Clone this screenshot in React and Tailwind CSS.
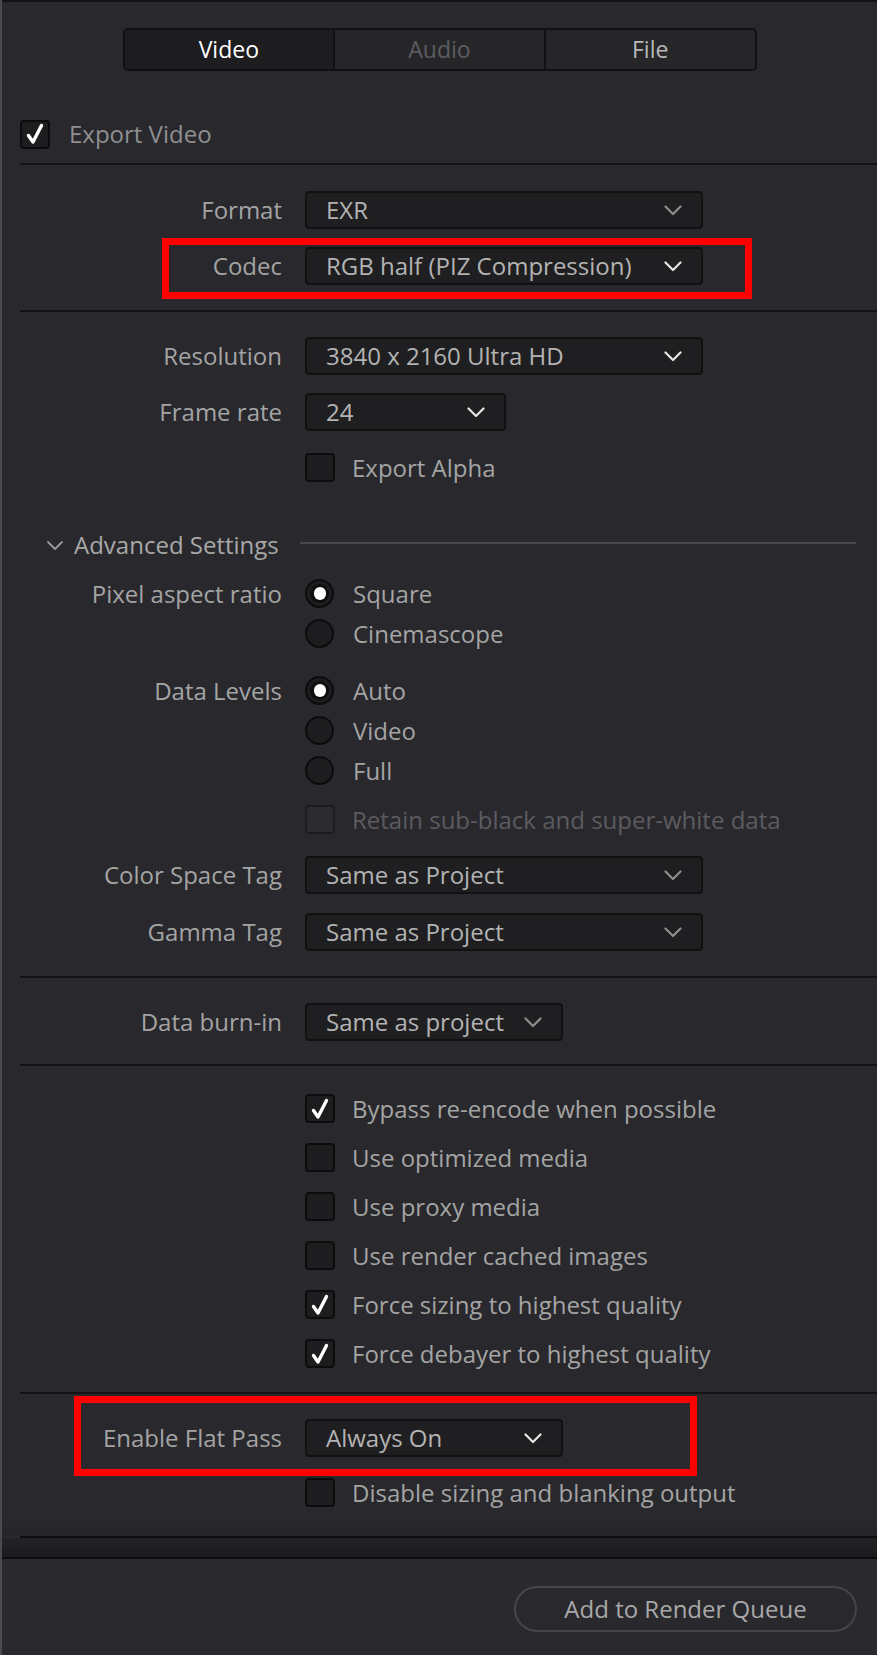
import React from 'react';

const Chevron = ({ bright }) => (
  <svg width="18" height="11" viewBox="0 0 18 11" fill="none">
    <polyline
      points="1.5,1.5 9,9 16.5,1.5"
      stroke={bright ? '#e6e6e6' : '#8e8e90'}
      strokeWidth="2.2"
      strokeLinecap="round"
      strokeLinejoin="round"
    />
  </svg>
);

const Tick = () => (
  <svg width="20" height="22" viewBox="0 0 20 22" fill="none">
    <path d="M3.5 12.5 L8 19 L16.5 2.5" stroke="#ffffff" strokeWidth="3.4" strokeLinecap="round" strokeLinejoin="round" />
  </svg>
);

const Box = ({ checked, disabled }) => (
  <div
    className={`w-[30px] h-[29px] shrink-0 rounded-[4px] border-2 flex items-center justify-center ${
      disabled ? 'border-[#1d1d20] bg-[#2b2b30]' : 'border-[#0c0c0d] bg-[#1d1d1f]'
    }`}
  >
    {checked && <Tick />}
  </div>
);

const Radio = ({ on }) => (
  <div className="w-[29px] h-[29px] shrink-0 rounded-full border-2 border-[#0c0c0d] bg-[#1d1d1f] flex items-center justify-center">
    {on && (
      <div className="w-[19px] h-[19px] rounded-full bg-[#0e0e0f] flex items-center justify-center">
        <div className="w-[12px] h-[13px] rounded-full bg-white" />
      </div>
    )}
  </div>
);

const Divider = ({ className = '' }) => <div className={`ml-[18px] h-[2px] bg-[#131315] ${className}`} />;

const Select = ({ value, width, bright }) => (
  <div
    className={`${width} h-[38px] rounded-[4px] border-2 border-[#111112] bg-[#1f1f21] flex items-center justify-between pl-[19px] pr-[19px]`}
  >
    <span className="text-[24px] leading-none text-[#b3b3b3] whitespace-nowrap">{value}</span>
    <Chevron bright={bright} />
  </div>
);

const Row = ({ label, children, className = '' }) => (
  <div className={`flex items-center ${className}`}>
    <div className="w-[280px] text-right text-[24px] leading-none text-[#a4a4a4] whitespace-nowrap">{label}</div>
    <div className="ml-[23px]">{children}</div>
  </div>
);

const CheckRow = ({ label, checked, disabled, className = '' }) => (
  <div className={`flex items-center pl-[303px] ${className}`}>
    <Box checked={checked} disabled={disabled} />
    <span className={`ml-[17px] text-[24px] leading-none whitespace-nowrap ${disabled ? 'text-[#5c5c60]' : 'text-[#a4a4a4]'}`}>
      {label}
    </span>
  </div>
);

const RadioItem = ({ label, on }) => (
  <div className="flex items-center h-[29px]">
    <Radio on={on} />
    <span className="ml-[19px] text-[24px] leading-none text-[#a4a4a4]">{label}</span>
  </div>
);

export default function App() {
  return (
    <div className="relative w-[877px] h-[1655px] overflow-hidden flex bg-[#28282d] font-['Open_Sans',sans-serif]">
      <div className="w-[2px] bg-[#4a4a4f] shrink-0" />
      <div className="flex-1 flex flex-col">
        <div className="h-[2px] bg-[#121214]" />

        {/* tabs */}
        <div className="mt-[26px] mx-auto w-[634px] h-[43px] rounded-[5px] border-2 border-[#111113] flex overflow-hidden text-[23px] leading-none">
          <div className="flex-1 bg-[#1d1d20] text-white flex items-center justify-center">Video</div>
          <div className="flex-1 bg-[#262629] border-l-2 border-[#111113] text-[#5d5d61] flex items-center justify-center">Audio</div>
          <div className="flex-1 bg-[#262629] border-l-2 border-[#111113] text-[#b8b8b8] flex items-center justify-center">File</div>
        </div>

        <div className="mt-[48px] pl-[18px] flex items-center h-[30px]">
          <Box checked />
          <span className="ml-[19px] text-[24px] leading-none text-[#8f8f91]">Export Video</span>
        </div>

        <Divider className="mt-[14px]" />

        <Row label="Format" className="mt-[26px]">
          <Select value="EXR" width="w-[398px]" />
        </Row>
        <Row label="Codec" className="mt-[18px]">
          <Select value="RGB half (PIZ Compression)" width="w-[398px]" bright />
        </Row>

        <Divider className="mt-[25px]" />

        <Row label="Resolution" className="mt-[25px]">
          <Select value="3840 x 2160 Ultra HD" width="w-[398px]" bright />
        </Row>
        <Row label="Frame rate" className="mt-[18px]">
          <Select value="24" width="w-[201px]" bright />
        </Row>
        <CheckRow label="Export Alpha" className="mt-[22px]" />

        {/* advanced settings */}
        <div className="mt-[48px] h-[30px] flex items-center pl-[44px]">
          <svg width="18" height="11" viewBox="0 0 18 11" fill="none">
            <polyline points="2,2 9,9 16,2" stroke="#9a9a9c" strokeWidth="1.8" strokeLinecap="round" strokeLinejoin="round" />
          </svg>
          <span className="ml-[10px] text-[24px] leading-none text-[#a8a8a8]">Advanced Settings</span>
          <div className="ml-[21px] mr-[21px] flex-1 h-[2px] bg-[#47474c] -mt-[4px]" />
        </div>

        <div className="mt-[19px] flex">
          <div className="w-[280px] h-[29px] flex items-center justify-end text-[24px] leading-none text-[#a4a4a4]">Pixel aspect ratio</div>
          <div className="ml-[23px] flex flex-col gap-[11px]">
            <RadioItem label="Square" on />
            <RadioItem label="Cinemascope" />
          </div>
        </div>

        <div className="mt-[28px] flex">
          <div className="w-[280px] h-[29px] flex items-center justify-end text-[24px] leading-none text-[#a4a4a4]">Data Levels</div>
          <div className="ml-[23px] flex flex-col gap-[11px]">
            <RadioItem label="Auto" on />
            <RadioItem label="Video" />
            <RadioItem label="Full" />
          </div>
        </div>
        <CheckRow label="Retain sub-black and super-white data" disabled className="mt-[20px]" />

        <Row label="Color Space Tag" className="mt-[22px]">
          <Select value="Same as Project" width="w-[398px]" />
        </Row>
        <Row label="Gamma Tag" className="mt-[19px]">
          <Select value="Same as Project" width="w-[398px]" />
        </Row>

        <Divider className="mt-[25px]" />

        <Row label="Data burn-in" className="mt-[25px]">
          <Select value="Same as project" width="w-[258px]" />
        </Row>

        <Divider className="mt-[23px]" />

        <div className="mt-[28px] flex flex-col gap-[20px]">
          <CheckRow label="Bypass re-encode when possible" checked />
          <CheckRow label="Use optimized media" />
          <CheckRow label="Use proxy media" />
          <CheckRow label="Use render cached images" />
          <CheckRow label="Force sizing to highest quality" checked />
          <CheckRow label="Force debayer to highest quality" checked />
        </div>

        <Divider className="mt-[24px]" />

        <Row label="Enable Flat Pass" className="mt-[25px]">
          <Select value="Always On" width="w-[258px]" bright />
        </Row>
        <CheckRow label="Disable sizing and blanking output" className="mt-[21px]" />

        <div className="mt-[12px] h-[17px] bg-gradient-to-b from-[#28282d] to-[#242428]" />
        <div className="ml-[18px] h-[2px] bg-[#0f0f11]" />
        <div className="h-[19px] bg-gradient-to-b from-[#232327] to-[#1b1b1e]" />
        <div className="h-[2px] bg-[#0d0d0f]" />

        {/* footer */}
        <div className="flex-1 bg-[#29292e] flex justify-end items-start pr-[20px] pt-[27px]">
          <button className="w-[343px] h-[46px] rounded-full border-2 border-[#45454a] bg-[#28282d] text-[24px] leading-none text-[#a8a8a8]">
            Add to Render Queue
          </button>
        </div>
      </div>

      {/* annotation boxes */}
      <div className="absolute left-[162px] top-[238px] w-[590px] h-[61px] border-[7px] border-[#ff0000]" />
      <div className="absolute left-[74px] top-[1396px] w-[623px] h-[80px] border-[7px] border-[#ff0000]" />
    </div>
  );
}
